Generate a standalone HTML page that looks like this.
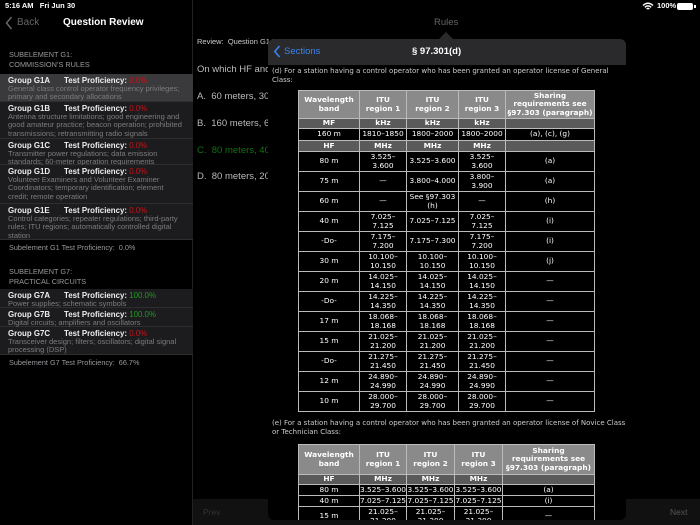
<!DOCTYPE html>
<html><head><meta charset="utf-8"><style>
*{margin:0;padding:0;box-sizing:border-box}
body{width:700px;height:525px;background:#000;overflow:hidden;position:relative;font-family:"Liberation Sans",sans-serif;color:#fff}
.a{position:absolute;white-space:nowrap}
.top{z-index:5}
.side{position:absolute;left:0;top:0;width:193px;height:525px;background:#000;border-right:1px solid #222}
.row{position:absolute;left:0;width:193px;background:#1c1c1e;border-bottom:1px solid #2e2e30;padding:2px 8px 0 8px}
.row .t{font-size:7.9px;font-weight:bold;line-height:9px;color:#eee}
.row .t span{display:inline-block;width:56px}
.row .d{font-size:7.5px;line-height:8.3px;color:#7c7c80;white-space:normal}
.red{color:#c0141a;font-weight:normal}
.grn{color:#1e9a1e;font-weight:normal}
.hdr{font-size:7.3px;color:#9a9a9e;line-height:13px}
.pop{position:absolute;left:268px;top:39px;width:358px;height:481px;background:#000;border-radius:6px;overflow:hidden}
.ph{position:absolute;left:0;top:0;width:358px;height:26px;background:#2a2a2c}
table{position:absolute;border-collapse:collapse;table-layout:fixed;font-family:"DejaVu Sans",sans-serif;font-size:7.4px;line-height:8.6px;text-align:center}
td{border:1px solid #bbb;padding:0;overflow:hidden;white-space:nowrap}
tr.h td{background:#8a8a8a;font-weight:bold}
tr.s td{background:#5a5a5a;font-weight:bold}
.note{position:absolute;left:4px;font-family:"DejaVu Sans",sans-serif;font-size:7px;line-height:9px;color:#ccc;white-space:normal;width:354px}
</style></head><body>

<div class="side">
<svg class="a" style="left:5px;top:16px" width="8" height="14" viewBox="0 0 8 14"><path d="M6.5 1L1.5 7L6.5 13" stroke="#666" stroke-width="1.5" fill="none"/></svg>
<div class="a" style="left:17px;top:17px;font-size:10px;color:#666">Back</div>
<div class="a" style="left:63px;top:17px;font-size:10px;font-weight:bold">Question Review</div>
<div class="a hdr" style="left:9px;top:50px;line-height:9.5px">SUBELEMENT G1:<br>COMMISSION’S RULES</div>
<div class="row" style="top:74px;height:28px;background:#3a3a3c"><div class="t"><span>Group G1A</span>Test Proficiency: <b class="red">0.0%</b></div><div class="d">General class control operator frequency privileges; primary and secondary allocations</div></div>
<div class="row" style="top:102px;height:37px"><div class="t"><span>Group G1B</span>Test Proficiency: <b class="red">0.0%</b></div><div class="d">Antenna structure limitations; good engineering and good amateur practice; beacon operation; prohibited transmissions; retransmitting radio signals</div></div>
<div class="row" style="top:139px;height:26px"><div class="t"><span>Group G1C</span>Test Proficiency: <b class="red">0.0%</b></div><div class="d">Transmitter power regulations; data emission standards; 60-meter operation requirements</div></div>
<div class="row" style="top:165px;height:39px"><div class="t"><span>Group G1D</span>Test Proficiency: <b class="red">0.0%</b></div><div class="d">Volunteer Examiners and Volunteer Examiner Coordinators; temporary identification; element credit; remote operation</div></div>
<div class="row" style="top:204px;height:36px"><div class="t"><span>Group G1E</span>Test Proficiency: <b class="red">0.0%</b></div><div class="d">Control categories; repeater regulations; third-party rules; ITU regions; automatically controlled digital station</div></div>
<div class="a hdr" style="left:9px;top:241px">Subelement G1 Test Proficiency:&nbsp; 0.0%</div>
<div class="a hdr" style="left:9px;top:267px;line-height:9.5px">SUBELEMENT G7:<br>PRACTICAL CIRCUITS</div>
<div class="row" style="top:289px;height:19px"><div class="t"><span>Group G7A</span>Test Proficiency: <b class="grn">100.0%</b></div><div class="d">Power supplies; schematic symbols</div></div>
<div class="row" style="top:308px;height:19px"><div class="t"><span>Group G7B</span>Test Proficiency: <b class="grn">100.0%</b></div><div class="d">Digital circuits; amplifiers and oscillators</div></div>
<div class="row" style="top:327px;height:28px"><div class="t"><span>Group G7C</span>Test Proficiency: <b class="red">0.0%</b></div><div class="d">Transceiver design; filters; oscillators; digital signal processing (DSP)</div></div>
<div class="a hdr" style="left:9px;top:356px">Subelement G7 Test Proficiency:&nbsp; 66.7%</div>
</div>

<div class="a top" style="left:5px;top:1px;font-size:7.5px;font-weight:bold">5:16 AM&nbsp;&nbsp; Fri Jun 30</div>
<div class="a top" style="left:657px;top:1px;font-size:7.5px;font-weight:bold">100%</div>
<svg class="a top" style="left:642px;top:2px" width="12" height="9" viewBox="0 0 12 9"><path d="M1 3.5Q6 -1 11 3.5M2.8 5.3Q6 2.5 9.2 5.3M4.6 7Q6 5.8 7.4 7" stroke="#fff" stroke-width="1.4" fill="none"/></svg>
<div class="a top" style="left:677px;top:3px;width:16px;height:7px;background:#fff;border-radius:2px"></div>
<div class="a top" style="left:694px;top:5px;width:1.5px;height:3px;background:#fff"></div>

<div class="a" style="left:434px;top:17px;font-size:9.5px;color:#666">Rules</div>
<div class="a" style="left:197px;top:37px;font-size:7.5px;color:#ccc">Review:&nbsp; Question G1A</div>
<div class="a" style="left:197px;top:64px;font-size:9.5px;color:#bbb">On which HF and/o</div>
<div class="a" style="left:197px;top:91px;font-size:9.5px;color:#bbb">A.&nbsp; 60 meters, 30 m</div>
<div class="a" style="left:197px;top:118px;font-size:9.5px;color:#bbb">B.&nbsp; 160 meters, 60</div>
<div class="a" style="left:197px;top:145px;font-size:9.5px;color:#157015">C.&nbsp; 80 meters, 40</div>
<div class="a" style="left:197px;top:171px;font-size:9.5px;color:#bbb">D.&nbsp; 80 meters, 20 m</div>
<div class="a" style="left:193px;top:499px;width:507px;height:26px;background:#111"></div>
<div class="a" style="left:203px;top:507px;font-size:8.5px;color:#333">Prev</div>
<div class="a" style="left:670px;top:507px;font-size:8.5px;color:#555">Next</div>

<svg class="a" style="left:438px;top:32px" width="16" height="8" viewBox="0 0 16 8"><path d="M0 8L8 0L16 8Z" fill="#2a2a2c"/></svg>
<div class="pop">
<div class="ph"></div>
<svg class="a" style="left:5px;top:6px" width="8" height="13" viewBox="0 0 8 13"><path d="M6.5 1L1.8 6.5L6.5 12" stroke="#3a84f0" stroke-width="1.6" fill="none"/></svg>
<div class="a" style="left:16px;top:7px;font-size:9.5px;color:#3a84f0">Sections</div>
<div class="a" style="left:144px;top:7px;font-size:9.5px;font-weight:bold">§ 97.301(d)</div>
<div class="note" style="top:28px">(d) For a station having a control operator who has been granted an operator license of General Class:</div>
<table style="left:30px;top:51px;width:296px">
<colgroup><col style="width:61px"><col style="width:47px"><col style="width:52px"><col style="width:47px"><col style="width:89px"></colgroup>
<tr class="h" style="height:28px"><td>Wavelength<br>band</td><td>ITU<br>region 1</td><td>ITU<br>region 2</td><td>ITU<br>region 3</td><td style="white-space:normal">Sharing requirements see §97.303 (paragraph)</td></tr>
<tr class="s" style="height:10px"><td>MF</td><td>kHz</td><td>kHz</td><td>kHz</td><td></td></tr>
<tr style="height:12px"><td>160 m</td><td>1810–1850</td><td>1800–2000</td><td>1800–2000</td><td>(a), (c), (g)</td></tr>
<tr class="s" style="height:11px"><td>HF</td><td>MHz</td><td>MHz</td><td>MHz</td><td></td></tr>
<tr style="height:20px"><td>80 m</td><td>3.525–<br>3.600</td><td>3.525–3.600</td><td>3.525–<br>3.600</td><td>(a)</td></tr>
<tr style="height:20px"><td>75 m</td><td>—</td><td>3.800–4.000</td><td>3.800–<br>3.900</td><td>(a)</td></tr>
<tr style="height:20px"><td>60 m</td><td>—</td><td>See §97.303<br>(h)</td><td>—</td><td>(h)</td></tr>
<tr style="height:20px"><td>40 m</td><td>7.025–<br>7.125</td><td>7.025–7.125</td><td>7.025–<br>7.125</td><td>(i)</td></tr>
<tr style="height:20px"><td>-Do-</td><td>7.175–<br>7.200</td><td>7.175–7.300</td><td>7.175–<br>7.200</td><td>(i)</td></tr>
<tr style="height:20px"><td>30 m</td><td>10.100–<br>10.150</td><td>10.100–<br>10.150</td><td>10.100–<br>10.150</td><td>(j)</td></tr>
<tr style="height:20px"><td>20 m</td><td>14.025–<br>14.150</td><td>14.025–<br>14.150</td><td>14.025–<br>14.150</td><td>—</td></tr>
<tr style="height:20px"><td>-Do-</td><td>14.225–<br>14.350</td><td>14.225–<br>14.350</td><td>14.225–<br>14.350</td><td>—</td></tr>
<tr style="height:20px"><td>17 m</td><td>18.068–<br>18.168</td><td>18.068–<br>18.168</td><td>18.068–<br>18.168</td><td>—</td></tr>
<tr style="height:20px"><td>15 m</td><td>21.025–<br>21.200</td><td>21.025–<br>21.200</td><td>21.025–<br>21.200</td><td>—</td></tr>
<tr style="height:20px"><td>-Do-</td><td>21.275–<br>21.450</td><td>21.275–<br>21.450</td><td>21.275–<br>21.450</td><td>—</td></tr>
<tr style="height:20px"><td>12 m</td><td>24.890–<br>24.990</td><td>24.890–<br>24.990</td><td>24.890–<br>24.990</td><td>—</td></tr>
<tr style="height:20px"><td>10 m</td><td>28.000–<br>29.700</td><td>28.000–<br>29.700</td><td>28.000–<br>29.700</td><td>—</td></tr>
</table>
<div class="note" style="top:380px">(e) For a station having a control operator who has been granted an operator license of Novice Class or Technician Class:</div>
<table style="left:30px;top:405px;width:296px">
<colgroup><col style="width:61px"><col style="width:47px"><col style="width:48px"><col style="width:48px"><col style="width:92px"></colgroup>
<tr class="h" style="height:30px"><td>Wavelength<br>band</td><td>ITU<br>region 1</td><td>ITU<br>region 2</td><td>ITU<br>region 3</td><td style="white-space:normal">Sharing requirements see §97.303 (paragraph)</td></tr>
<tr class="s" style="height:10px"><td>HF</td><td>MHz</td><td>MHz</td><td>MHz</td><td></td></tr>
<tr style="height:11px"><td>80 m</td><td>3.525–3.600</td><td>3.525–3.600</td><td>3.525–3.600</td><td>(a)</td></tr>
<tr style="height:11px"><td>40 m</td><td>7.025–7.125</td><td>7.025–7.125</td><td>7.025–7.125</td><td>(i)</td></tr>
<tr style="height:20px"><td>15 m</td><td>21.025–<br>21.200</td><td>21.025–<br>21.200</td><td>21.025–<br>21.200</td><td>—</td></tr>
</table>
</div>
</body></html>
